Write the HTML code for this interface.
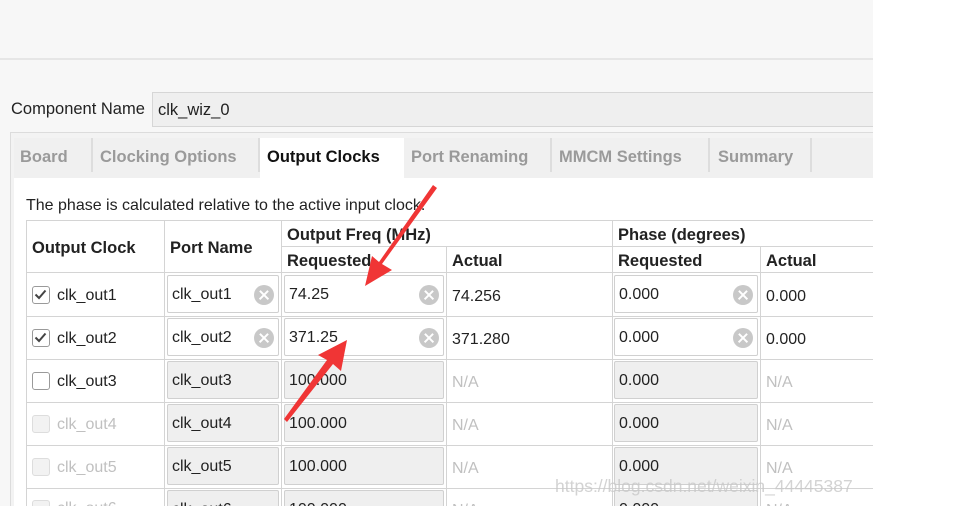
<!DOCTYPE html>
<html><head><meta charset="utf-8"><style>
*{margin:0;padding:0;box-sizing:border-box}
body{width:980px;height:531px;position:relative;background:#fff;font-family:"Liberation Sans",Arial,sans-serif;font-size:16px;color:#222;overflow:hidden}
.a{position:absolute}
.bold{font-weight:bold}
.tab{position:absolute;top:138px;height:40px;line-height:38px;font-weight:bold;color:#9a9a9a;font-size:16.5px}
.sep{position:absolute;top:138px;width:2px;height:34px;background:#ddd}
.hl{position:absolute;height:1px;background:#d4d4d4}
.vl{position:absolute;width:1px;background:#d4d4d4}
.inp{position:absolute;border:1px solid #d0d0d0;border-radius:2px;background:#fff;padding-left:4px;line-height:38px;height:38px;font-size:16px;color:#222}
.dis{background:#efefef}
.x{position:absolute;right:4px;top:9px;width:20px;height:20px;border-radius:50%;background:#c8c8c8}
.x:before,.x:after{content:"";position:absolute;left:4px;top:9px;width:12px;height:2.4px;background:#fff;transform:rotate(45deg)}
.x:after{transform:rotate(-45deg)}
.cb{position:absolute;left:32px;width:18px;height:18px;border:1.5px solid #9a9a9a;border-radius:3px;background:#fff}
.cb.d{border-color:#ddd;background:#f2f2f2}
.lbl{position:absolute;left:57px;font-size:16px}
.na{color:#c0c0c0}
</style></head><body>
<div class="a" style="left:0;top:0;width:873px;height:506px;background:#f7f7f7"></div>
<div class="a" style="left:0;top:58px;width:873px;height:2px;background:#e6e6e6"></div>
<div class="a" style="left:11px;top:100px;font-size:16.5px">Component Name</div>
<div class="a" style="left:152px;top:92px;width:721px;height:35px;background:#efefef;border:1px solid #d6d6d6;border-right:none;padding-left:5px;line-height:35px;font-size:16.5px">clk_wiz_0</div>
<div class="a" style="left:10px;top:132px;width:863px;height:374px;border:1px solid #dcdcdc;border-right:none;border-bottom:none;background:#f3f3f3"></div>
<div class="a" style="left:14px;top:138px;width:859px;height:40px;background:#f0f0f0"></div>
<div class="a" style="left:14px;top:178px;width:859px;height:328px;background:#fff"></div>
<div class="tab" style="left:20px">Board</div>
<div class="sep" style="left:91px"></div>
<div class="tab" style="left:100px">Clocking Options</div>
<div class="sep" style="left:258px"></div>
<div class="a" style="left:260px;top:138px;width:144px;height:40px;background:#fff"></div>
<div class="tab" style="left:267px;color:#111">Output Clocks</div>
<div class="tab" style="left:411px">Port Renaming</div>
<div class="sep" style="left:550px"></div>
<div class="tab" style="left:559px">MMCM Settings</div>
<div class="sep" style="left:708px"></div>
<div class="tab" style="left:718px">Summary</div>
<div class="sep" style="left:810px"></div>
<div class="a" style="left:26px;top:197px;font-size:16px">The phase is calculated relative to the active input clock.</div>

<div class="a" style="left:26px;top:220px;width:847px;height:286px;background:#fff"></div>
<div class="hl" style="left:26px;top:220px;width:847px"></div>
<div class="hl" style="left:281px;top:246px;width:592px"></div>
<div class="hl" style="left:26px;top:272px;width:847px"></div>
<div class="hl" style="left:26px;top:316px;width:847px"></div>
<div class="hl" style="left:26px;top:359px;width:847px"></div>
<div class="hl" style="left:26px;top:402px;width:847px"></div>
<div class="hl" style="left:26px;top:445px;width:847px"></div>
<div class="hl" style="left:26px;top:488px;width:847px"></div>
<div class="vl" style="left:26px;top:220px;height:286px"></div>
<div class="vl" style="left:164px;top:220px;height:286px"></div>
<div class="vl" style="left:281px;top:220px;height:286px"></div>
<div class="vl" style="left:446px;top:246px;height:260px"></div>
<div class="vl" style="left:612px;top:220px;height:286px"></div>
<div class="vl" style="left:760px;top:246px;height:260px"></div>

<div class="a bold" style="left:32px;top:239px;font-size:16.5px">Output Clock</div>
<div class="a bold" style="left:170px;top:239px;font-size:16.5px">Port Name</div>
<div class="a bold" style="left:287px;top:226px;font-size:16.5px">Output Freq (MHz)</div>
<div class="a bold" style="left:287px;top:252px;font-size:16.5px">Requested</div>
<div class="a bold" style="left:452px;top:252px;font-size:16.5px">Actual</div>
<div class="a bold" style="left:618px;top:226px;font-size:16.5px">Phase (degrees)</div>
<div class="a bold" style="left:618px;top:252px;font-size:16.5px">Requested</div>
<div class="a bold" style="left:766px;top:252px;font-size:16.5px">Actual</div>

<!-- row1 -->
<div class="cb" style="top:286px"><svg width="15" height="15" viewBox="0 0 15 15" style="position:absolute;left:0;top:0"><path d="M2.5 7.5 L6 11 L12.5 3.5" stroke="#444" stroke-width="2" fill="none"/></svg></div>
<div class="lbl" style="top:287px">clk_out1</div>
<div class="inp" style="left:167px;top:275px;width:112px">clk_out1<span class="x"></span></div>
<div class="inp" style="left:284px;top:275px;width:160px">74.25<span class="x"></span></div>
<div class="a" style="left:452px;top:288px">74.256</div>
<div class="inp" style="left:614px;top:275px;width:144px">0.000<span class="x"></span></div>
<div class="a" style="left:766px;top:288px">0.000</div>
<!-- row2 -->
<div class="cb" style="top:329px"><svg width="15" height="15" viewBox="0 0 15 15" style="position:absolute;left:0;top:0"><path d="M2.5 7.5 L6 11 L12.5 3.5" stroke="#444" stroke-width="2" fill="none"/></svg></div>
<div class="lbl" style="top:330px">clk_out2</div>
<div class="inp" style="left:167px;top:318px;width:112px">clk_out2<span class="x"></span></div>
<div class="inp" style="left:284px;top:318px;width:160px">371.25<span class="x"></span></div>
<div class="a" style="left:452px;top:331px">371.280</div>
<div class="inp" style="left:614px;top:318px;width:144px">0.000<span class="x"></span></div>
<div class="a" style="left:766px;top:331px">0.000</div>
<!-- row3 -->
<div class="cb" style="top:372px"></div>
<div class="lbl" style="top:373px">clk_out3</div>
<div class="inp dis" style="left:167px;top:361px;width:112px">clk_out3</div>
<div class="inp dis" style="left:284px;top:361px;width:160px">100.000</div>
<div class="a na" style="left:452px;top:374px">N/A</div>
<div class="inp dis" style="left:614px;top:361px;width:144px">0.000</div>
<div class="a na" style="left:766px;top:374px">N/A</div>
<!-- row4 -->
<div class="cb d" style="top:415px"></div>
<div class="lbl na" style="top:416px">clk_out4</div>
<div class="inp dis" style="left:167px;top:404px;width:112px">clk_out4</div>
<div class="inp dis" style="left:284px;top:404px;width:160px">100.000</div>
<div class="a na" style="left:452px;top:417px">N/A</div>
<div class="inp dis" style="left:614px;top:404px;width:144px">0.000</div>
<div class="a na" style="left:766px;top:417px">N/A</div>
<!-- row5 -->
<div class="cb d" style="top:458px"></div>
<div class="lbl na" style="top:459px">clk_out5</div>
<div class="inp dis" style="left:167px;top:447px;width:112px">clk_out5</div>
<div class="inp dis" style="left:284px;top:447px;width:160px">100.000</div>
<div class="a na" style="left:452px;top:460px">N/A</div>
<div class="inp dis" style="left:614px;top:447px;width:144px">0.000</div>
<div class="a na" style="left:766px;top:460px">N/A</div>
<!-- row6 partial -->
<div class="cb d" style="top:500px"></div>
<div class="lbl na" style="top:500px">clk_out6</div>
<div class="inp dis" style="left:167px;top:490px;width:112px">clk_out6</div>
<div class="inp dis" style="left:284px;top:490px;width:160px">100.000</div>
<div class="a na" style="left:452px;top:502px">N/A</div>
<div class="inp dis" style="left:614px;top:490px;width:144px">0.000</div>
<div class="a na" style="left:766px;top:502px">N/A</div>
<div class="a" style="left:0;top:506px;width:980px;height:25px;background:#fff"></div>
<div class="a" style="left:555px;top:476px;font-size:17.5px;color:rgba(200,200,200,0.8)">https://blog.csdn.net/weixin_44445387</div>

<svg class="a" style="left:0;top:0" width="980" height="531">
<polygon points="433,185 437,188 382,264 392,270 365,286 372,256 379,262" fill="#f03535"/>
<polygon points="287,422 284,419 327,360 318,355 347,340 341,371 333,364" fill="#f03535"/>
</svg>
</body></html>
